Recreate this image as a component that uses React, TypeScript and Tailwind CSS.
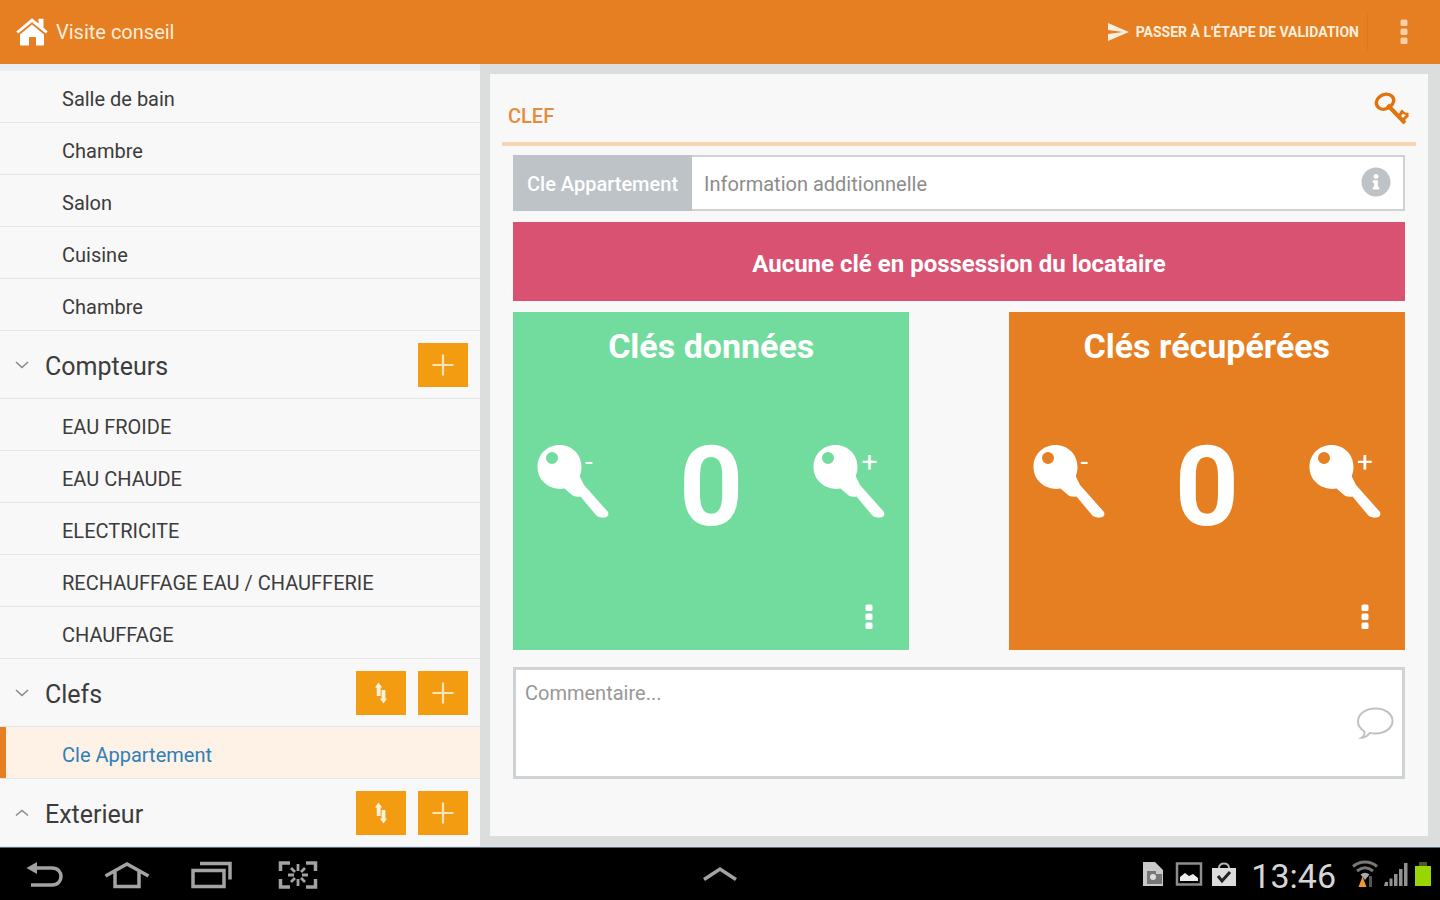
import { Fragment } from "react";
import { FaInfoCircle } from "react-icons/fa";
import { MdSend } from "react-icons/md";

type Section = {
  title: string;
  open: boolean;
  sortable: boolean;
  items: string[];
};

const rooms = ["Salle de bain", "Chambre", "Salon", "Cuisine", "Chambre"];

const sections: Section[] = [
  {
    title: "Compteurs",
    open: true,
    sortable: false,
    items: ["EAU FROIDE", "EAU CHAUDE", "ELECTRICITE", "RECHAUFFAGE EAU / CHAUFFERIE", "CHAUFFAGE"],
  },
  { title: "Clefs", open: true, sortable: true, items: ["Cle Appartement"] },
  { title: "Exterieur", open: false, sortable: true, items: [] },
];

const selectedItem = "Cle Appartement";

function HomeIcon() {
  return (
    <svg viewBox="0 0 32 28" className="h-7 w-8 shrink-0" fill="#fff" aria-hidden="true">
      <path d="M16 6.500 28 16.500v10a1 1 0 0 1-1 1h-7v-7.500a1 1 0 0 0-1-1h-5a1 1 0 0 0-1 1v7.500H5a1 1 0 0 1-1-1v-10z" />
      <path d="M16 0.300 22.500 5.500V0.800h5v8.900l4.200 3.700-1.800 2.200L16 4.200 2.100 15.600.3 13.400z" />
    </svg>
  );
}

function Dots({ className }: { className: string }) {
  return (
    <svg viewBox="0 0 8 26" className={`h-[26px] w-2 ${className}`} fill="currentColor" aria-hidden="true">
      <rect x="0.500" y="0.500" width="7" height="6.500" rx="1.500" />
      <rect x="0.500" y="9.500" width="7" height="6.500" rx="1.500" />
      <rect x="0.500" y="18.500" width="7" height="6.500" rx="1.500" />
    </svg>
  );
}

function Chevron({ open }: { open: boolean }) {
  return (
    <svg viewBox="0 0 14 8" className="h-2 w-3.5 shrink-0" fill="none" stroke="#8a8a8a" strokeWidth="1.600" aria-hidden="true">
      <path d={open ? "M1 1l6 5.500L13 1" : "M1 6.500 7 1.500l6 5"} />
    </svg>
  );
}

function PlusIcon() {
  return (
    <svg viewBox="0 0 22 22" className="size-[22px]" stroke="#fde3b8" strokeWidth="2.200" aria-hidden="true">
      <path d="M11 0.500v21M0.500 11h21" />
    </svg>
  );
}

function SortIcon() {
  return (
    <svg viewBox="0 0 12 22" className="h-[22px] w-3" fill="#fff3df" aria-hidden="true">
      <path d="M3.500 0.500 7.200 5.500H5.600V14H1.800V5.500H0z" />
      <path d="M8.500 21.500 12 16.500h-1.600V8H6.600v8.500H4.800z" />
    </svg>
  );
}

function Sidebar() {
  return (
    <nav aria-label="Pièces et équipements" className="w-1/3 shrink-0 border-t-[7px] border-[#ebeef0] bg-[#f8f8f8] text-[#3c3c3c]">
      <ul>
        {rooms.map((room, i) => (
          <Item key={i} label={room} />
        ))}
      </ul>
      {sections.map((section) => (
        <Fragment key={section.title}>
          <div className="flex h-[68px] items-center border-b border-[#e4e5e6] pr-3 pl-[15px]">
            <button type="button" aria-expanded={section.open} className="flex flex-1 items-center gap-4 text-left text-[25px] leading-8">
              <Chevron open={section.open} />
              <span className="pt-1">{section.title}</span>
            </button>
            <div className="flex gap-3">
              {section.sortable && (
                <button type="button" aria-label={`Trier ${section.title}`} className="flex h-11 w-[50px] items-center justify-center bg-[#f39c12]">
                  <SortIcon />
                </button>
              )}
              <button type="button" aria-label={`Ajouter ${section.title}`} className="flex h-11 w-[50px] items-center justify-center bg-[#f39c12]">
                <PlusIcon />
              </button>
            </div>
          </div>
          <ul>
            {section.items.map((item) => (
              <Item key={item} label={item} />
            ))}
          </ul>
        </Fragment>
      ))}
    </nav>
  );
}

function Item({ label }: { label: string }) {
  const active = label === selectedItem;
  return (
    <li className="border-b border-[#e4e5e6]">
      <a
        href="#"
        aria-current={active ? "page" : undefined}
        className={`flex h-[51px] items-center border-l-[6px] pt-1 pl-14 text-xl leading-6 ${
          active ? "border-[#e67e22] bg-[#fef2e6] text-[#2f7fb8]" : "border-transparent"
        }`}
      >
        {label}
      </a>
    </li>
  );
}

function KeyButton({ sign, label }: { sign: string; label: string }) {
  return (
    <button type="button" aria-label={label} className="relative">
      <svg viewBox="0 0 72 74" className="h-[74px] w-[72px]" fill="currentColor" aria-hidden="true">
        <path
          fillRule="evenodd"
          d="M22.500 1C35 1 44.500 10.500 44.500 23c0 3.500-.8 6.500-1.800 9.200L47 41l24 27c1.200 3.500-.5 5.800-4.500 5.600-3.500.2-6-.6-8-3L43.500 52.500c-3.500.5-7 .3-9-2L27.500 44.600C14 46.800.5 37.500.5 23 .5 10.500 10 1 22.500 1zM15 8a6 6 0 1 0 0 12 6 6 0 0 0 0-12z"
        />
      </svg>
      <span className="absolute top-0 left-12 text-[28px] leading-9">{sign}</span>
    </button>
  );
}

function KeyCard({ title, color }: { title: string; color: string }) {
  return (
    <section className={`flex h-[338px] w-4/9 flex-col text-white ${color}`}>
      <h2 className="pt-3 text-center text-[34px] leading-11 font-bold">{title}</h2>
      <div className="flex flex-1 items-center justify-between px-6 pb-2.5">
        <KeyButton sign="-" label={`Retirer : ${title}`} />
        <output className="pt-3 text-[112px] leading-30 font-bold">0</output>
        <KeyButton sign="+" label={`Ajouter : ${title}`} />
      </div>
      <div className="flex justify-end pr-9 pb-5">
        <button type="button" aria-label={`Options : ${title}`}>
          <Dots className="block text-white" />
        </button>
      </div>
    </section>
  );
}

function Panel() {
  return (
    <main className="flex flex-1 bg-[#dcdddd] pt-[10px] pr-3 pb-[11px] pl-[10px]">
      <div className="flex-1 bg-[#f8f8f8] px-3">
        <header className="flex h-[72px] items-center justify-between border-b-4 border-[#f8d5b0] pr-1.5 pl-1.5">
          <h1 className="pt-4 text-xl leading-6 font-medium text-[#e88a3a]">CLEF</h1>
          <svg viewBox="0 0 36 34" className="mt-0.5 h-[34px] w-9" fill="none" stroke="#df7510" aria-hidden="true">
            <path d="M4.500 15.500C1 12.500 2 7.500 5.500 4.800 9.500 1.500 15 1.300 18 4.200c3 3 1.800 7.300-1.500 10.100-3.500 3-8.500 4.200-12 1.200z" strokeWidth="3.400" />
            <path d="M13.500 13 31 31" strokeWidth="4" />
            <path d="M25 24l3.500-4.500M29 28l5-5" strokeWidth="3" />
            <path d="M27 18.500l3.500 3 4 .8" strokeWidth="2.400" />
          </svg>
        </header>
        <div className="flex flex-col gap-[11px] px-[11px] pt-[9px]">
          <div className="flex h-14 items-center border-2 border-[#cfd2d4] bg-white pr-3">
            <label htmlFor="info" className="-my-0.5 -ml-0.5 flex h-14 items-center bg-[#bdc3c7] px-3.5 pt-0.5 text-xl leading-6 font-medium text-white">
              Cle Appartement
            </label>
            <input
              id="info"
              type="text"
              placeholder="Information additionnelle"
              className="h-full min-w-0 flex-1 px-3 pt-0.5 text-xl leading-6 outline-none placeholder:text-[#8c8c8c]"
            />
            <FaInfoCircle className="mb-0.5 size-[30px] text-[#bdc3c7]" aria-hidden="true" />
          </div>
          <p className="flex h-[79px] items-center justify-center bg-[#da5272] pt-1 text-2xl leading-8 font-bold text-white">
            Aucune clé en possession du locataire
          </p>
          <div className="flex justify-between">
            <KeyCard title="Clés données" color="bg-[#71dc9d]" />
            <KeyCard title="Clés récupérées" color="bg-[#e67e22]" />
          </div>
          <div className="mt-1.5 flex h-28 items-center border-[3px] border-[#d0d3d5] bg-white pr-2">
            <textarea
              aria-label="Commentaire"
              placeholder="Commentaire..."
              className="h-full flex-1 resize-none px-[9px] pt-[11px] text-xl leading-6 outline-none placeholder:text-[#979797]"
            />
            <svg viewBox="0 0 38 34" className="h-[34px] w-[38px]" fill="none" stroke="#bfc2c4" strokeWidth="2" aria-hidden="true">
              <path d="M8.500 25.500C4.500 23 2 19.500 2 15.500 2 8 9.500 2.500 19.500 2.500S36.500 8 36.500 15 29 27.500 19.500 27.500c-2 0-4-.2-5.500-.6-2 2.400-4.500 4.600-8.500 4.900 2-1.500 3.400-3.500 3-6.300z" />
            </svg>
          </div>
        </div>
      </div>
    </main>
  );
}

function SystemBar() {
  return (
    <footer className="grid h-[53px] grid-cols-[1fr_auto_1fr] items-center border-t border-[#5a7080] bg-black text-[#a3a3a3]">
      <div className="flex items-center pt-0.5 pl-[26px]">
        <button type="button" aria-label="Retour">
          <svg viewBox="0 0 38 28" className="h-7 w-[38px]" fill="none" stroke="currentColor" strokeWidth="3.500">
            <path d="M8 7h18c12 0 12 17 0 17H5" />
            <path d="M0.500 7 11 1v12z" fill="currentColor" stroke="none" />
          </svg>
        </button>
        <button type="button" aria-label="Accueil" className="ml-10">
          <svg viewBox="0 0 46 28" className="h-7 w-[46px]" fill="none" stroke="currentColor" strokeWidth="3.500">
            <path d="M1.500 15 23 3l21.500 12M11 11v14.500h24V11" />
          </svg>
        </button>
        <button type="button" aria-label="Applications récentes" className="ml-10">
          <svg viewBox="0 0 42 28" className="h-7 w-[42px]" fill="none" stroke="currentColor" strokeWidth="3.500">
            <path d="M3 9.500h31v16H3zM10 2.500h30v16" />
          </svg>
        </button>
        <button type="button" aria-label="Capture d'écran" className="ml-[46px]">
          <svg viewBox="0 0 40 30" className="h-[30px] w-10" fill="none" stroke="currentColor" strokeWidth="3.500">
            <path d="M2.500 11V3H12M28 3h9.500v8M37.500 19v8H28M12 27H2.500v-8" />
            <path d="M20 4v7M20 19v7M10 15h6M24 15h6M13 8l4 4M27 8l-4 4M13 22l4-4M27 22l-4-4" strokeWidth="2.800" />
          </svg>
        </button>
      </div>
      <button type="button" aria-label="Ouvrir le panneau">
        <svg viewBox="0 0 36 16" className="h-4 w-9" fill="none" stroke="currentColor" strokeWidth="3.500">
          <path d="M2 13.500 18 3l16 10.500" />
        </svg>
      </button>
      <div className="flex items-center justify-end pr-2 text-[#d6d6d6]">
        <svg viewBox="0 0 22 24" className="h-6 w-[22px]" aria-hidden="true">
          <path d="M1 0h12l8 8v16H1z" fill="#c9c9c9" />
          <path d="M5 9h9v3h6v10H5z" fill="#777" />
          <circle cx="11" cy="15" r="3" fill="#ddd" />
        </svg>
        <svg viewBox="0 0 28 24" className="ml-[11px] h-6 w-7" aria-hidden="true">
          <path d="M2 1.500h24v21H2z" fill="none" stroke="#8d8d8d" strokeWidth="2.500" />
          <path d="M5 19v-4l5-4 4 3 4-2 5 4v3z" fill="#eee" />
        </svg>
        <svg viewBox="0 0 26 25" className="ml-2 h-[25px] w-[26px]" aria-hidden="true">
          <path d="M1 6h24v18H1z" fill="#dcdcdc" />
          <path d="M8 6c0-6 10-6 10 0" fill="none" stroke="#b5b5b5" strokeWidth="2" />
          <path d="M7 14l4 5 8-9" fill="none" stroke="#222" strokeWidth="3" />
        </svg>
        <time className="ml-[14px] pt-1 text-[34px] leading-9">13:46</time>
        <svg viewBox="0 0 26 28" className="ml-4 h-7 w-[26px]" fill="none" aria-hidden="true">
          <path d="M1 6.500c7-6 17-6 24 0M5 11c5-4 11-4 16 0" stroke="#777" strokeWidth="3" />
          <path d="M8.500 14.500c3-2.200 6-2.200 9 0L13 20z" fill="#aaa" />
          <path d="M18.500 16v11" stroke="#555" strokeWidth="3" />
          <path d="M10.500 16.500 14.500 27h-8z" fill="#f0962c" />
        </svg>
        <svg viewBox="0 0 24 24" className="ml-1.5 size-6" fill="#929292" aria-hidden="true">
          <path d="M1 20h3v4H0zM5.500 16.500h3V24h-3zM10 12h3.500v12H10zM15 7h3.500v17H15zM20 1h3.500v23H20z" />
        </svg>
        <svg viewBox="0 0 18 25" className="ml-1.5 h-[25px] w-[18px]" aria-hidden="true">
          <path d="M5 0h8v4H5z" fill="#4a5a20" />
          <path d="M1 4h16v20H1z" fill="#99d500" />
        </svg>
      </div>
    </footer>
  );
}

export default function App() {
  return (
    <div className="flex min-h-screen flex-col font-[Roboto,'Liberation_Sans',sans-serif]">
      <header className="flex h-16 items-center justify-between bg-[#e67e22] pr-8 pl-4 text-[#fdeedd]">
        <a href="#" className="flex items-center gap-2 text-xl leading-6">
          <HomeIcon />
          Visite conseil
        </a>
        <div className="flex items-center">
          <button type="button" className="flex h-9 items-center gap-1.5 border-r border-[#df7616] pr-2 text-sm leading-5 font-bold">
            <MdSend className="size-6" aria-hidden="true" />
            PASSER À L'ÉTAPE DE VALIDATION
          </button>
          <button type="button" aria-label="Plus d'options" className="ml-8">
            <Dots className="block text-[#f9d0a8]" />
          </button>
        </div>
      </header>
      <div className="flex flex-1">
        <Sidebar />
        <Panel />
      </div>
      <SystemBar />
    </div>
  );
}
